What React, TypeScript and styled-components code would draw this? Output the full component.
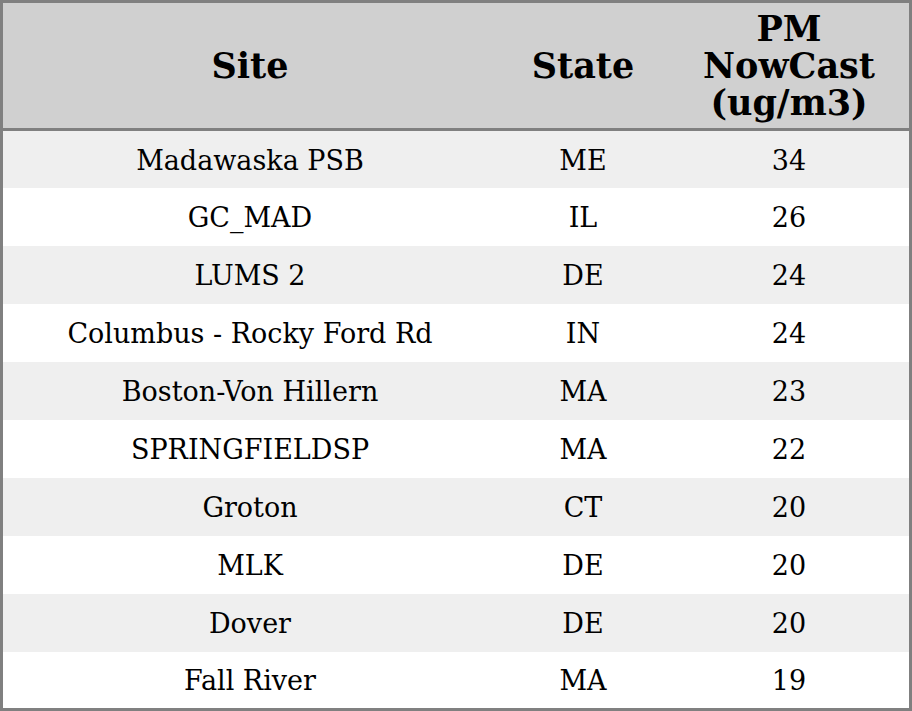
import React from "react";
import styled, { createGlobalStyle } from "styled-components";

const Global = createGlobalStyle`
  html, body { margin: 0; padding: 0; background: #ffffff; }
  #root { width: 912px; height: 711px; }
`;

const Table = styled.table`
  width: 912px;
  height: 711px;
  border-collapse: collapse;
  border: 3px solid #808080;
  font-family: "DejaVu Serif", serif;
  color: #000;
  table-layout: fixed;
`;

const HeadRow = styled.tr`
  background: #d0d0d0;
  height: 128px;
  border-bottom: 3px solid #808080;
`;

const Th = styled.th<{ $w: number }>`
  width: ${(p) => p.$w}px;
  font-size: 35px;
  font-weight: bold;
  text-align: center;
  vertical-align: middle;
  line-height: 37px;
  padding: 0;
`;

const Row = styled.tr<{ $odd: boolean }>`
  background: ${(p) => (p.$odd ? "#efefef" : "#ffffff")};
  height: 58px;
`;

const Td = styled.td`
  font-size: 27px;
  text-align: center;
  vertical-align: middle;
  padding: 2px 0 0;
`;

const rows: [string, string, number][] = [
  ["Madawaska PSB", "ME", 34],
  ["GC_MAD", "IL", 26],
  ["LUMS 2", "DE", 24],
  ["Columbus - Rocky Ford Rd", "IN", 24],
  ["Boston-Von Hillern", "MA", 23],
  ["SPRINGFIELDSP", "MA", 22],
  ["Groton", "CT", 20],
  ["MLK", "DE", 20],
  ["Dover", "DE", 20],
  ["Fall River", "MA", 19],
];

export default function App() {
  return (
    <>
      <Global />
      <Table>
        <thead>
          <HeadRow>
            <Th $w={494}>Site</Th>
            <Th $w={172}>State</Th>
            <Th $w={240}>
              PM
              <br />
              NowCast
              <br />
              (ug/m3)
            </Th>
          </HeadRow>
        </thead>
        <tbody>
          {rows.map((r, i) => (
            <Row key={i} $odd={i % 2 === 0}>
              <Td>{r[0]}</Td>
              <Td>{r[1]}</Td>
              <Td>{r[2]}</Td>
            </Row>
          ))}
        </tbody>
      </Table>
    </>
  );
}
